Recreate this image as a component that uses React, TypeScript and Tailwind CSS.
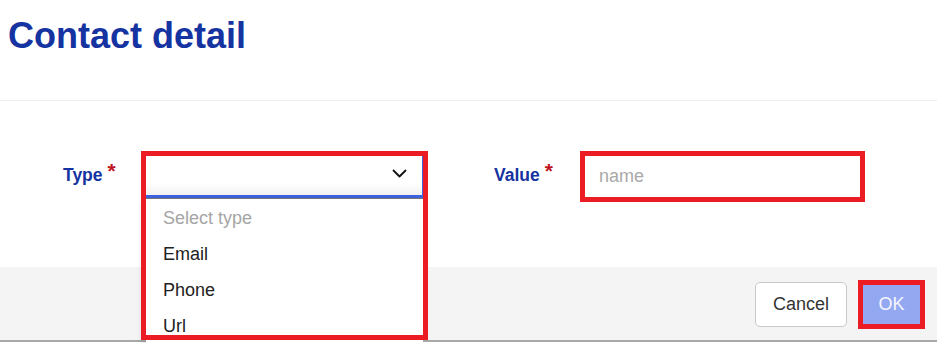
import React from 'react';

const options = ['Email', 'Phone', 'Url'];

function Chevron() {
  return (
    <svg width="15" height="9" viewBox="0 0 15 9" fill="none" className="text-[#111]">
      <path d="M1.5 1.5L7.5 7.5L13.5 1.5" stroke="currentColor" strokeWidth="1.8" strokeLinecap="round" strokeLinejoin="round" />
    </svg>
  );
}

export default function App() {
  return (
    <div className="w-[937px] h-[343px] bg-white overflow-hidden font-['Liberation_Sans',Arial,sans-serif]">
      <div className="h-[101px] border-b border-[#eeeeee] pl-2 pt-[18px]">
        <h1 className="text-[36px] leading-[36px] font-bold text-[#1533a1]">Contact detail</h1>
      </div>

      <div className="relative z-10 h-[166px] pt-[50px]">
        <div className="flex items-start">
          <div className="w-[141px] pl-[63px] mt-[14px] text-[17.5px] leading-[20px] font-bold text-[#1533a1] flex items-start">
            Type
            <span className="ml-[5px] text-[#c0141e] text-[21px] leading-[20px] relative -top-[4px]">*</span>
          </div>

          <div className="relative w-[287px] h-[50px]">
            <div className="absolute left-[2px] top-[2px] w-[281px] h-[45px] bg-gradient-to-b from-white from-70% to-[#f2f2f2] border-r-2 border-b-[3px] border-[#3d63df] flex items-center justify-end pr-[15px] pb-[2px]">
              <Chevron />
            </div>
            <div className="absolute left-[5px] top-[47px] w-[277px] h-[160px] pt-px bg-white border-t border-[#777] shadow-[-3px_3px_8px_rgba(0,0,0,0.12)] text-[18px] leading-[36px]">
              <div className="px-[17px] text-[#a5a5a5]">Select type</div>
              {options.map((o) => (
                <div key={o} className="px-[17px] text-[#222]">{o}</div>
              ))}
            </div>
            <div className="absolute left-0 top-0 w-[287px] h-[189px] border-[5px] border-[#ec1c24] pointer-events-none" />
          </div>

          <div className="w-[152px] pl-[66px] mt-[14px] text-[17.5px] leading-[20px] font-bold text-[#1533a1] flex items-start">
            Value
            <span className="ml-[5px] text-[#c0141e] text-[21px] leading-[20px] relative -top-[4px]">*</span>
          </div>

          <div className="w-[285px] h-[51px] border-[5px] border-[#ec1c24] bg-white flex items-center pl-[14px] text-[18px] text-[#a9a9a9]">
            name
          </div>
        </div>
      </div>

      <div className="h-[75px] bg-[#f4f4f4] border-b-2 border-[#a9a9a9] flex items-center justify-end pr-[12px] gap-[11px] pt-px">
        <button className="w-[92px] h-[45px] bg-white border border-[#c9c9c9] rounded-[5px] text-[18px] text-[#333] pt-px">
          Cancel
        </button>
        <div className="w-[67px] h-[49px] border-[5px] border-[#ec1c24]">
          <button className="w-full h-full bg-[#94a8f2] text-[18px] text-[#f4f6ff] pt-px">OK</button>
        </div>
      </div>
    </div>
  );
}
